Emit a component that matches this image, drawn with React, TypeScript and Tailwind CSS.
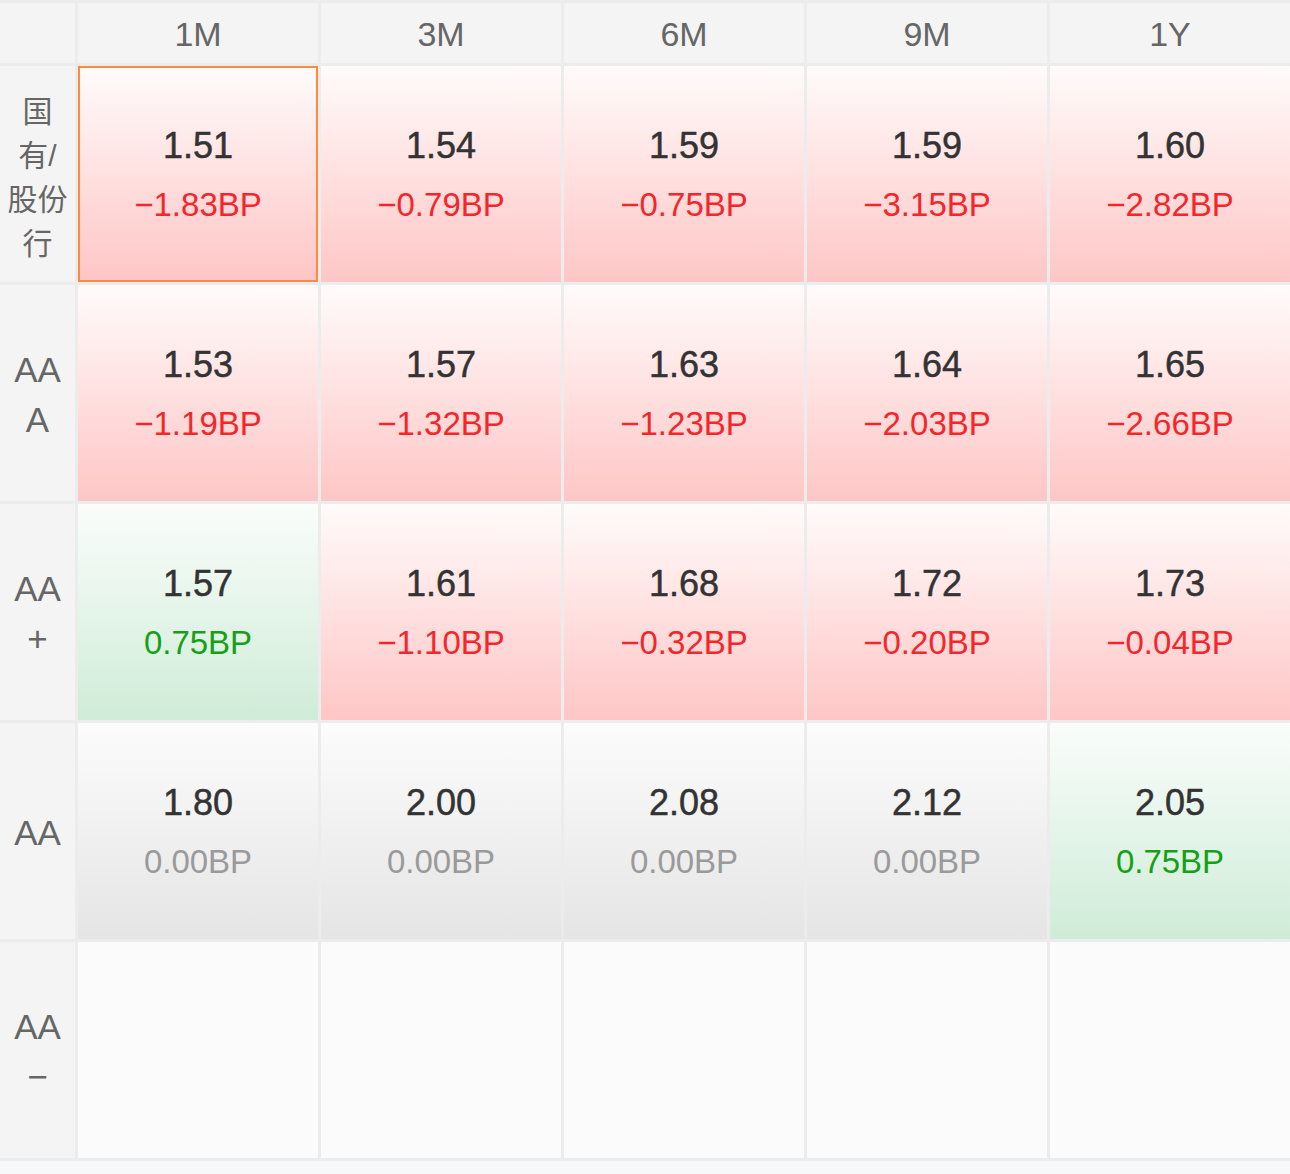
import React from 'react';

// ── Types ────────────────────────────────────────────────
type Tone = 'down' | 'up' | 'flat' | 'empty';

interface Cell {
  rate?: string;
  bp?: string;
  tone: Tone;
  active?: boolean;
}

interface Row {
  label: string[];
  cjk?: boolean;
  cells: Cell[];
}

// ── Data ─────────────────────────────────────────────────
const TERMS = ['1M', '3M', '6M', '9M', '1Y'];

const ROWS: Row[] = [
  {
    label: ['国', '有/', '股份', '行'],
    cjk: true,
    cells: [
      { rate: '1.51', bp: '−1.83BP', tone: 'down', active: true },
      { rate: '1.54', bp: '−0.79BP', tone: 'down' },
      { rate: '1.59', bp: '−0.75BP', tone: 'down' },
      { rate: '1.59', bp: '−3.15BP', tone: 'down' },
      { rate: '1.60', bp: '−2.82BP', tone: 'down' },
    ],
  },
  {
    label: ['AA', 'A'],
    cells: [
      { rate: '1.53', bp: '−1.19BP', tone: 'down' },
      { rate: '1.57', bp: '−1.32BP', tone: 'down' },
      { rate: '1.63', bp: '−1.23BP', tone: 'down' },
      { rate: '1.64', bp: '−2.03BP', tone: 'down' },
      { rate: '1.65', bp: '−2.66BP', tone: 'down' },
    ],
  },
  {
    label: ['AA', '+'],
    cells: [
      { rate: '1.57', bp: '0.75BP', tone: 'up' },
      { rate: '1.61', bp: '−1.10BP', tone: 'down' },
      { rate: '1.68', bp: '−0.32BP', tone: 'down' },
      { rate: '1.72', bp: '−0.20BP', tone: 'down' },
      { rate: '1.73', bp: '−0.04BP', tone: 'down' },
    ],
  },
  {
    label: ['AA'],
    cells: [
      { rate: '1.80', bp: '0.00BP', tone: 'flat' },
      { rate: '2.00', bp: '0.00BP', tone: 'flat' },
      { rate: '2.08', bp: '0.00BP', tone: 'flat' },
      { rate: '2.12', bp: '0.00BP', tone: 'flat' },
      { rate: '2.05', bp: '0.75BP', tone: 'up' },
    ],
  },
  {
    label: ['AA', '−'],
    cells: [
      { tone: 'empty' },
      { tone: 'empty' },
      { tone: 'empty' },
      { tone: 'empty' },
      { tone: 'empty' },
    ],
  },
];

const BG: Record<Tone, string> = {
  down: 'bg-gradient-to-b from-[#fffbfb] to-[#fec6c6]',
  up: 'bg-gradient-to-b from-[#fafdfb] to-[#cfecd8]',
  flat: 'bg-gradient-to-b from-[#fcfcfc] to-[#e5e5e5]',
  empty: 'bg-[#fbfbfb]',
};

const BP_COLOR: Record<Tone, string> = {
  down: 'text-[#f5262a]',
  up: 'text-[#16a016]',
  flat: 'text-[#9a9a9a]',
  empty: '',
};

const FONT = { fontFamily: '"Liberation Sans", "Noto Sans CJK SC", sans-serif' };

// ── Component ────────────────────────────────────────────
function RateCell({ cell }: { cell: Cell }) {
  return (
    <div
      className={`flex h-[216px] flex-col items-center justify-center ${BG[cell.tone]} ${
        cell.active ? 'border-2 border-[#fd8a3e]' : ''
      }`}
    >
      {cell.rate && (
        <>
          <div className="text-[36px] font-medium leading-[46px] text-[#333333] [-webkit-text-stroke:0.5px_#333333]">
            {cell.rate}
          </div>
          <div className={`mt-[16px] text-[33px] leading-[40px] ${BP_COLOR[cell.tone]}`}>{cell.bp}</div>
        </>
      )}
    </div>
  );
}

export default function App() {
  return (
    <div className="w-[1290px] bg-[#f7f8fa]" style={FONT}>
      <div className="grid grid-cols-[75px_repeat(5,240px)] gap-[3px] bg-[#ececec] py-[3px]">
        {/* Header */}
        <div className="h-[60px] bg-[#f4f4f4]" />
        {TERMS.map((t) => (
          <div
            key={t}
            className="flex h-[60px] items-center justify-center bg-[#f4f4f4] pt-[2px] text-[34px] text-[#666666]"
          >
            {t}
          </div>
        ))}

        {/* Rows */}
        {ROWS.map((row, i) => (
          <React.Fragment key={i}>
            <div
              className={`flex h-[216px] flex-col items-center justify-center bg-[#f4f4f4] text-[#666666] ${
                row.cjk ? 'pt-[8px] text-[30px] leading-[44px]' : 'pt-[4px] text-[35px] leading-[50px]'
              }`}
            >
              {row.label.map((l, j) => (
                <div key={j}>{l}</div>
              ))}
            </div>
            {row.cells.map((c, j) => (
              <RateCell key={j} cell={c} />
            ))}
          </React.Fragment>
        ))}
      </div>
      <div className="h-[13px]" />
    </div>
  );
}
